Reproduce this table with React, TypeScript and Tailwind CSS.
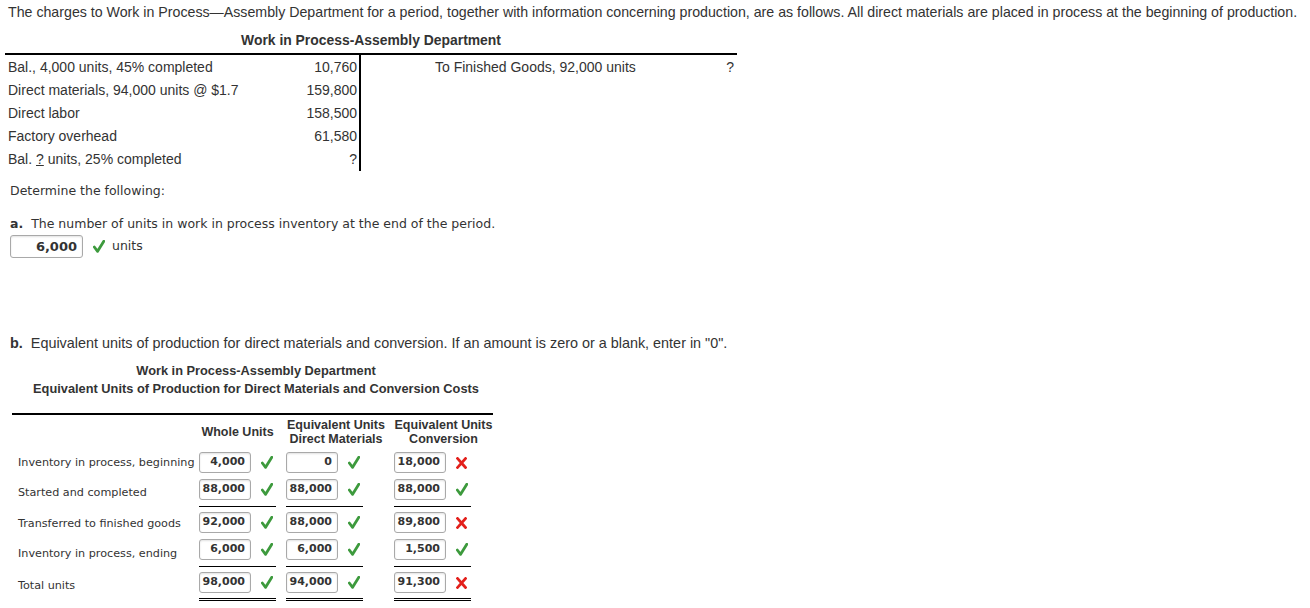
import React from 'react';

const tahoma = "font-['Liberation_Sans',Arial,sans-serif]";
const verdana = "font-['DejaVu_Sans',Verdana,sans-serif]";

const Check = () => (
  <svg width="12" height="13" viewBox="0 0 12 13" className="shrink-0">
    <path d="M1.3 7 L4.6 11.3 L10.8 1.3" fill="none" stroke="#3d9a3d" strokeWidth="2.8" strokeLinecap="round" strokeLinejoin="round" />
  </svg>
);

const Cross = () => (
  <svg width="11" height="12" viewBox="0 0 11 12" className="shrink-0">
    <path d="M1.5 1.5 L9.5 10.5 M9.5 1.5 L1.5 10.5" fill="none" stroke="#e3201b" strokeWidth="2.7" strokeLinecap="square" />
  </svg>
);

const Box: React.FC<{ value: string }> = ({ value }) => (
  <div className="w-[52px] h-[21px] shrink-0 rounded-[3px] border border-[#a9a9a9] bg-white shadow-[inset_0_1px_2px_rgba(0,0,0,0.12)] flex items-center justify-end pr-[5px] text-[11px] font-bold text-[#333]">
    {value}
  </div>
);

type Cell = { v: string; ok: boolean };
type Row = { label: string; cells: Cell[]; lpad: string; ruleTop?: boolean; total?: boolean };

const rows: Row[] = [
  { label: 'Inventory in process, beginning', lpad: 'pt-[2px]', cells: [{ v: '4,000', ok: true }, { v: '0', ok: true }, { v: '18,000', ok: false }] },
  { label: 'Started and completed', lpad: 'pt-[8px]', cells: [{ v: '88,000', ok: true }, { v: '88,000', ok: true }, { v: '88,000', ok: true }] },
  { label: 'Transferred to finished goods', lpad: 'pt-[6px]', ruleTop: true, cells: [{ v: '92,000', ok: true }, { v: '88,000', ok: true }, { v: '89,800', ok: false }] },
  { label: 'Inventory in process, ending', lpad: 'pt-[10px]', cells: [{ v: '6,000', ok: true }, { v: '6,000', ok: true }, { v: '1,500', ok: true }] },
  { label: 'Total units', lpad: 'pt-[6px]', ruleTop: true, total: true, cells: [{ v: '98,000', ok: true }, { v: '94,000', ok: true }, { v: '91,300', ok: false }] },
];

const ledger = [
  ['Bal., 4,000 units, 45% completed', '10,760'],
  ['Direct materials, 94,000 units @ $1.7', '159,800'],
  ['Direct labor', '158,500'],
  ['Factory overhead', '61,580'],
];

export default function App() {
  return (
    <div className="w-[1310px] h-[608px] overflow-hidden bg-white text-[#333]">
      <p className={`${tahoma} pl-[8px] pt-[4px] text-[14.2px] leading-[16px] whitespace-nowrap`}>
        The charges to Work in Process—Assembly Department for a period, together with information concerning production, are as follows. All direct materials are placed in process at the beginning of production.
      </p>

      {/* T account */}
      <div className={`${tahoma} ml-[5px] mt-[9px] w-[732px] text-[14px]`}>
        <div className="h-[24px] text-center font-bold leading-[16px] pt-[3px] text-[13.9px]">Work in Process-Assembly Department</div>
        <div className="flex border-t-2 border-black">
          <div className="w-[356px] border-r-2 border-black pt-[1px]">
            {ledger.map(([l, v]) => (
              <div key={l} className="h-[23px] flex items-center justify-between pl-[3px] pr-[2px]">
                <span>{l}</span>
                <span>{v}</span>
              </div>
            ))}
            <div className="h-[23px] flex items-center justify-between pl-[3px] pr-[2px]">
              <span>
                Bal. <span className="underline">?</span> units, 25% completed
              </span>
              <span>?</span>
            </div>
          </div>
          <div className="flex-1 pt-[1px]">
            <div className="h-[23px] flex items-center justify-between pl-[74px] pr-[3px]">
              <span>To Finished Goods, 92,000 units</span>
              <span>?</span>
            </div>
          </div>
        </div>
      </div>

      <div className={`${verdana} pl-[10px] mt-[12px] text-[12.5px] leading-[16px]`}>Determine the following:</div>

      <div className={`${verdana} pl-[10px] mt-[17px] text-[12.5px] leading-[16px]`}>
        <span className="font-bold">a.</span>&nbsp; The number of units in work in process inventory at the end of the period.
      </div>
      <div className={`${verdana} pl-[10px] mt-[3px] flex items-center gap-[10px] text-[12.5px]`}>
        <div className="w-[73px] h-[23px] rounded-[3px] border border-[#a9a9a9] shadow-[inset_0_1px_2px_rgba(0,0,0,0.12)] flex items-center justify-end pr-[5px] text-[13px] font-bold">
          6,000
        </div>
        <Check />
        <span className="-ml-[3px]">units</span>
      </div>

      <div className={`${tahoma} pl-[10px] mt-[77px] text-[14.4px] leading-[16px] whitespace-nowrap`}>
        <span className="font-bold">b.</span>&nbsp; Equivalent units of production for direct materials and conversion. If an amount is zero or a blank, enter in "0".
      </div>

      <div className={`${tahoma} ml-[12px] w-[488px] mt-[11px] text-center font-bold text-[12.8px] leading-[18px]`}>
        <div>Work in Process-Assembly Department</div>
        <div>Equivalent Units of Production for Direct Materials and Conversion Costs</div>
      </div>

      {/* Equivalent units table */}
      <div className={`${verdana} ml-[12px] mt-[15px] w-[481px] border-t-2 border-black text-[11px]`}>
        <div className={`${tahoma} grid grid-cols-[187px_87px_108px_99px] h-[34px] items-center font-bold text-[12.5px] leading-[14px]`}>
          <div />
          <div className="w-[77px] text-center whitespace-nowrap">Whole Units</div>
          <div className="w-[100px] text-center whitespace-nowrap">Equivalent Units<br />Direct Materials</div>
          <div className="w-[99px] text-center whitespace-nowrap">Equivalent Units<br />Conversion</div>
        </div>
        {rows.map((r) => (
          <div key={r.label} className={`grid grid-cols-[187px_87px_108px_99px] ${r.ruleTop ? 'pt-[3px]' : ''}`}>
            <div className={`pl-[6px] flex items-center whitespace-nowrap text-[11.2px] ${r.lpad}`}>{r.label}</div>
            {r.cells.map((c, i) => (
              <div key={i}>
                <div
                  className={`w-[77px] flex items-center gap-[10px] ${r.ruleTop ? 'border-t border-black pt-[5px]' : 'pt-[3px]'} ${
                    r.total ? 'pb-[5px] border-b-[3px] border-double border-b-black' : 'pb-[3px]'
                  }`}
                >
                  <Box value={c.v} />
                  {c.ok ? <Check /> : <Cross />}
                </div>
              </div>
            ))}
          </div>
        ))}
      </div>
    </div>
  );
}
